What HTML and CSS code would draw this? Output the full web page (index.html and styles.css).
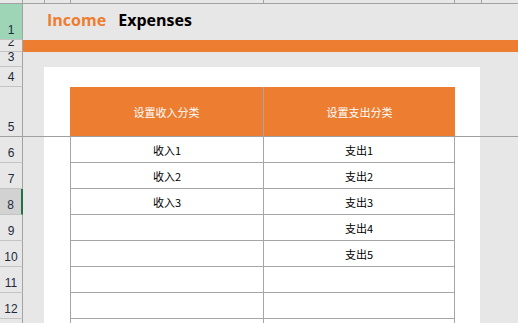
FILE: index.html
```html
<!DOCTYPE html>
<html lang="zh-CN">
<head>
  <meta charset="UTF-8" />
  <meta name="viewport" content="width=device-width, initial-scale=1" />
  <title>Income Expenses</title>
  <link rel="stylesheet" href="styles.css">
</head>
<body>

  <div class="colbar">
    <span class="c c-a"></span>
    <span class="c c-b"></span>
    <span class="c c-c"></span>
    <span class="c c-d"></span>
    <span class="c c-e"></span>
    <span class="c c-f"></span>
    <span class="c c-g"></span>
  </div>

  <div class="frozen">
    <div class="rh hl r1">1</div>
    <div class="rh r2">2</div>
    <div class="rh r3">3</div>
    <div class="rh r4">4</div>
    <div class="rh r5 last">5</div>

    <div class="title">
      <span class="income">Income</span>
      <span class="expenses">Expenses</span>
    </div>
    <div class="band"></div>
    <div class="panel panel-top">
      <div class="thead">
        <div class="th th-1">设置收入分类</div>
        <div class="th th-2">设置支出分类</div>
      </div>
    </div>
  </div>

  <div class="sheet">
    <div class="rh">6</div>
    <div class="rh">7</div>
    <div class="rh sel">8</div>
    <div class="rh">9</div>
    <div class="rh">10</div>
    <div class="rh">11</div>
    <div class="rh">12</div>
    <div class="rh">13</div>

    <div class="panel panel-body">
      <div class="tr"><div class="td td-1">收入1</div><div class="td td-2">支出1</div></div>
      <div class="tr"><div class="td td-1">收入2</div><div class="td td-2">支出2</div></div>
      <div class="tr"><div class="td td-1">收入3</div><div class="td td-2">支出3</div></div>
      <div class="tr"><div class="td td-1"></div><div class="td td-2">支出4</div></div>
      <div class="tr"><div class="td td-1"></div><div class="td td-2">支出5</div></div>
      <div class="tr"><div class="td td-1"></div><div class="td td-2"></div></div>
      <div class="tr"><div class="td td-1"></div><div class="td td-2"></div></div>
      <div class="tr"><div class="td td-1"></div><div class="td td-2"></div></div>
    </div>
  </div>

</body>
</html>
```

FILE: styles.css
```css
html, body {
  margin: 0;
  height: 100%;
  overflow: hidden;
}
body {
  background-color: #e7e7e7;
  font-family: "Liberation Sans", "Noto Sans CJK SC", sans-serif;
  color: #222;
}
* {
  box-sizing: border-box;
}

/* column header strip */
.colbar {
  display: flex;
  height: 4px;
  border-bottom: 1px solid #a3a3a3;
}
.c {
  height: 3px;
  border-right: 1px solid #a3a3a3;
}
.c-a { width: 23px; }
.c-b { width: 22px; }
.c-c { width: 26px; }
.c-d { width: 193px; }
.c-e { width: 191px; }
.c-f { width: 27px; }
.c-g { flex: 1; border-right: none; }

/* row headers */
.rh {
  grid-column: 1;
  display: flex;
  justify-content: center;
  align-items: flex-end;
  overflow: hidden;
  font-size: 12px;
  line-height: 12px;
  padding-bottom: 3px;
  border-right: 1px solid #a3a3a3;
  border-bottom: 1px solid #c4c4c4;
  color: #1e2a3a;
}
.rh.hl {
  background-color: #9fd5b7;
}
.rh.sel {
  background-color: #d2d2d2;
  border-right: 2px solid #217346;
}
.rh.last {
  border-bottom: none;
}
.r1 { grid-row: 1; }
.r2 { grid-row: 2; }
.r3 { grid-row: 3; }
.r4 { grid-row: 4; }
.r5 { grid-row: 5; }

/* frozen top part */
.frozen {
  display: grid;
  grid-template-columns: 23px 1fr;
  grid-template-rows: 36px 12px 15px 20px 49px;
  border-bottom: 1px solid #a0a0a0;
}
.title {
  grid-column: 2;
  grid-row: 1;
  padding: 6px 0 0 24px;
  font-family: "Open Sans", sans-serif;
  font-weight: 700;
  font-size: 16px;
  line-height: 20px;
}
.income {
  color: #ed7d31;
}
.expenses {
  color: #000;
  margin-left: 8px;
}
.band {
  grid-column: 2;
  grid-row: 2;
  background-color: #ed7d31;
}
.panel {
  grid-column: 2;
  background: white;
  margin-left: 21px;
  width: 436px;
  padding-left: 26px;
}
.panel-top {
  grid-row: 4 / span 2;
  padding-top: 20px;
}
.thead {
  display: flex;
  height: 49px;
  background-color: #ed7d31;
  width: 385px;
}
.th {
  display: flex;
  align-items: center;
  justify-content: center;
  color: white;
  font-family: "Noto Sans CJK SC", sans-serif;
  font-size: 11px;
}
.th-1 {
  width: 194px;
  border-right: 1px solid #a6a6a6;
}
.th-2 {
  width: 191px;
}

/* scrolling part */
.sheet {
  display: grid;
  grid-template-columns: 23px 1fr;
  grid-template-rows: repeat(8, 26px);
}
.panel-body {
  grid-row: 1 / -1;
}
.tr {
  display: flex;
  height: 26px;
}
.td {
  display: flex;
  align-items: center;
  justify-content: center;
  border-bottom: 1px solid #a6a6a6;
  border-right: 1px solid #a6a6a6;
  font-family: "Noto Sans CJK SC", sans-serif;
  font-size: 11px;
  color: #000;
}
.td-1 {
  width: 194px;
  border-left: 1px solid #a6a6a6;
}
.td-2 {
  width: 191px;
}
```
